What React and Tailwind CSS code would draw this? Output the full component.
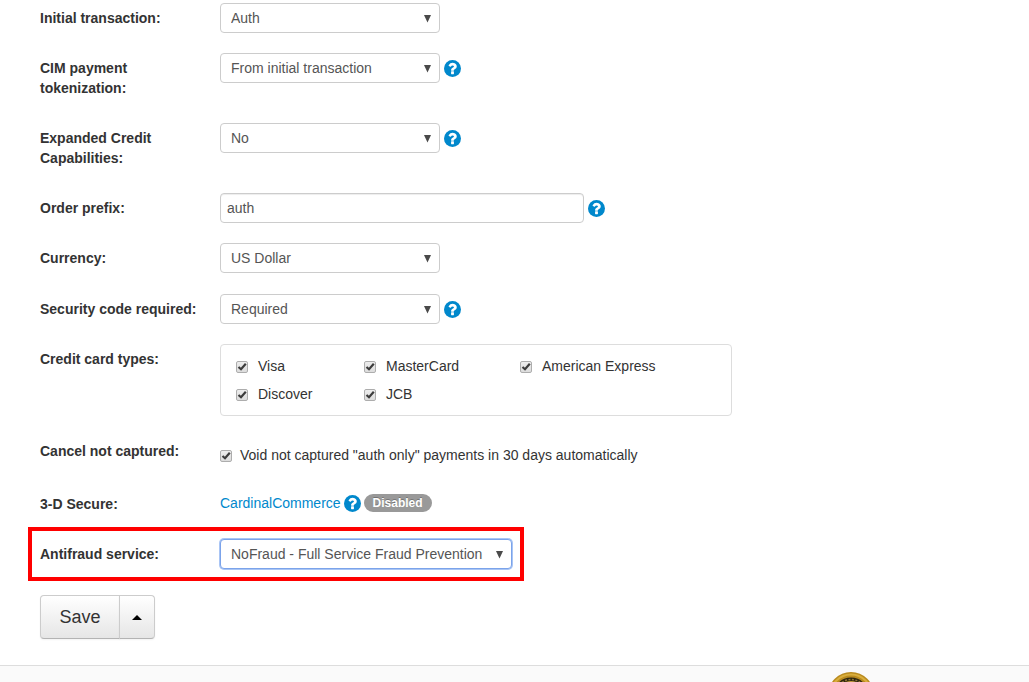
import React from 'react';
import clsx from 'clsx';

const cards = ['Visa', 'MasterCard', 'American Express', 'Discover', 'JCB'];

const HelpButton = ({ topic }) => (
  <button type="button" aria-label={`Help: ${topic}`} className="shrink-0 cursor-pointer">
    <svg viewBox="0 0 1536 1536" className="size-[17px]" aria-hidden="true">
      <circle cx="768" cy="768" r="768" fill="#0088cc" />
      <path
        fill="#fff"
        d="M896 1248v-192q0-14-9-23t-23-9H672q-14 0-23 9t-9 23v192q0 14 9 23t23 9h192q14 0 23-9t9-23zM1152 576q0-88-55.500-163T958 297t-170-41q-243 0-371 213-15 24 8 42l132 100q7 6 19 6 16 0 25-12 53-68 86-92 34-24 86-24 48 0 85.500 26t37.500 59q0 38-20 61t-68 45q-63 28-115.500 86.500T640 892v36q0 14 9 23t23 9h192q14 0 23-9t9-23q0-19 21.500-49.500T972 829q32-18 49-28.500t46-35 44.500-48 28-60.500 12.500-81z"
      />
    </svg>
  </button>
);

const Row = ({ id, label, className, children }) => (
  <div className={clsx('flex items-start', className)}>
    <label htmlFor={id} className="w-40 mr-5 py-[5px] shrink-0 font-bold text-[#333]">
      {label}
    </label>
    {children}
  </div>
);

const Select = ({ id, value, focused, className }) => (
  <div className={clsx('relative', className)}>
    <select
      id={id}
      className={clsx(
        'block w-full h-[30px] pl-2.5 pr-7 appearance-none rounded border bg-white text-[#555] outline-none',
        focused ? 'border-[#7ba3ea] ring-1 ring-[#a9c5f5]' : 'border-[#ccc]'
      )}
    >
      <option>{value}</option>
    </select>
    <svg viewBox="0 0 8 8" className="absolute right-2 top-3 size-2 pointer-events-none" aria-hidden="true">
      <path d="M0 0h7L3.500 7.500z" fill="#4a4a4a" />
    </svg>
  </div>
);

const Checkbox = ({ label, className }) => (
  <label className={clsx('flex items-center text-[#333]', className)}>
    <span className="grid pt-0.5">
      <input
        type="checkbox"
        defaultChecked
        className="peer col-start-1 row-start-1 size-3 appearance-none rounded-[2px] border border-[#adadad] bg-linear-to-b from-[#ededed] to-[#dcdcdc]"
      />
      <svg
        viewBox="0 0 12 12"
        className="col-start-1 row-start-1 size-3 pointer-events-none invisible peer-checked:visible"
        aria-hidden="true"
      >
        <path d="M2.500 6 5 8.300 9.800 2.800" fill="none" stroke="#3c3c3c" strokeWidth="2.200" />
      </svg>
    </span>
    {label}
  </label>
);

const Medal = () => (
  <svg viewBox="0 0 40 10" className="w-10 h-2.5" aria-hidden="true">
    <circle cx="20" cy="23" r="23" fill="#b98a1e" />
    <circle cx="20" cy="23" r="20.500" fill="none" stroke="#d9ae3c" strokeWidth="2" />
    <circle cx="20" cy="23" r="17.500" fill="#2e260f" />
    <circle cx="20" cy="23" r="15.500" fill="none" stroke="#8d7430" strokeWidth="1.500" strokeDasharray="2 1.500" />
    <circle cx="20" cy="23" r="14" fill="#c39c3c" />
  </svg>
);

const App = () => {
  return (
    <div className="min-h-screen flex flex-col bg-white font-['Liberation_Sans',Arial,sans-serif] text-[14px] leading-5">
      <form className="flex flex-col gap-5 px-10 pt-[3px] pb-[26px]" onSubmit={(e) => e.preventDefault()}>
        <Row id="transaction" label="Initial transaction:">
          <Select id="transaction" value="Auth" className="w-[220px]" />
        </Row>

        <Row id="cim" label="CIM payment tokenization:">
          <div className="flex items-center gap-1">
            <Select id="cim" value="From initial transaction" className="w-[220px]" />
            <HelpButton topic="CIM payment tokenization" />
          </div>
        </Row>

        <Row id="expanded" label="Expanded Credit Capabilities:">
          <div className="flex items-center gap-1">
            <Select id="expanded" value="No" className="w-[220px]" />
            <HelpButton topic="Expanded Credit Capabilities" />
          </div>
        </Row>

        <Row id="prefix" label="Order prefix:">
          <div className="flex items-center gap-1">
            <input
              id="prefix"
              type="text"
              defaultValue="auth"
              className="w-[364px] h-[30px] px-1.5 rounded border border-[#ccc] bg-white text-[#555] shadow-[inset_0_1px_1px_rgba(0,0,0,0.075)]"
            />
            <HelpButton topic="Order prefix" />
          </div>
        </Row>

        <Row id="currency" label="Currency:">
          <Select id="currency" value="US Dollar" className="w-[220px]" />
        </Row>

        <Row id="cvv" label="Security code required:" className="pt-px">
          <div className="flex items-center gap-1">
            <Select id="cvv" value="Required" className="w-[220px]" />
            <HelpButton topic="Security code required" />
          </div>
        </Row>

        {/* Accepted cards */}
        <div className="flex items-start" role="group" aria-labelledby="cards-label">
          <span id="cards-label" className="w-40 mr-5 py-[5px] shrink-0 font-bold text-[#333]">
            Credit card types:
          </span>
          <div className="w-[512px] grid grid-cols-[128px_156px_auto] px-[15px] py-[7px] rounded border border-[#ddd]">
            {cards.map((card) => (
              <Checkbox key={card} label={card} className="h-7 gap-2.5" />
            ))}
          </div>
        </div>

        <div className="flex items-start" role="group" aria-labelledby="cancel-label">
          <span id="cancel-label" className="w-40 mr-5 py-[5px] shrink-0 font-bold text-[#333]">
            Cancel not captured:
          </span>
          <Checkbox
            label={'Void not captured "auth only" payments in 30 days automatically'}
            className="pt-[9px] pb-1 gap-2"
          />
        </div>

        <div className="flex items-start">
          <span className="w-40 mr-5 py-[5px] shrink-0 font-bold text-[#333]">3-D Secure:</span>
          <div className="flex items-center gap-[3px] h-7">
            <a href="#cardinal" className="text-[#0088cc]">
              CardinalCommerce
            </a>
            <HelpButton topic="3-D Secure" />
            <span className="px-[9px] rounded-full bg-[#999] text-xs leading-[18px] font-bold text-white [text-shadow:0_-1px_0_rgba(0,0,0,0.25)]">
              Disabled
            </span>
          </div>
        </div>

        <Row
          id="antifraud"
          label="Antifraud service:"
          className="self-start outline-4 outline-offset-8 outline-[#ff0000]"
        >
          <Select id="antifraud" value="NoFraud - Full Service Fraud Prevention" focused className="w-[292px]" />
        </Row>

        {/* Split save button */}
        <div className="flex pt-1.5">
          <button
            type="submit"
            className="h-11 w-20 rounded-l border border-[#ccc] border-b-[#b3b3b3] bg-linear-to-b from-white to-[#e6e6e6] text-lg text-[#333] shadow-[0_1px_2px_rgba(0,0,0,0.05)]"
          >
            Save
          </button>
          <button
            type="button"
            aria-label="More save options"
            className="h-11 w-9 -ml-px flex items-center justify-center rounded-r border border-[#ccc] border-b-[#b3b3b3] bg-linear-to-b from-white to-[#e6e6e6] shadow-[0_1px_2px_rgba(0,0,0,0.05)]"
          >
            <svg viewBox="0 0 10 5" className="w-2.5 h-[5px]" aria-hidden="true">
              <path d="M0 5 5 0l5 5z" fill="#000" />
            </svg>
          </button>
        </div>
      </form>

      <footer className="grow flex justify-end items-start pt-1.5 pr-[158px] border-t border-[#ddd] bg-[#fafafa]">
        <Medal />
      </footer>
    </div>
  );
};

export default App;
